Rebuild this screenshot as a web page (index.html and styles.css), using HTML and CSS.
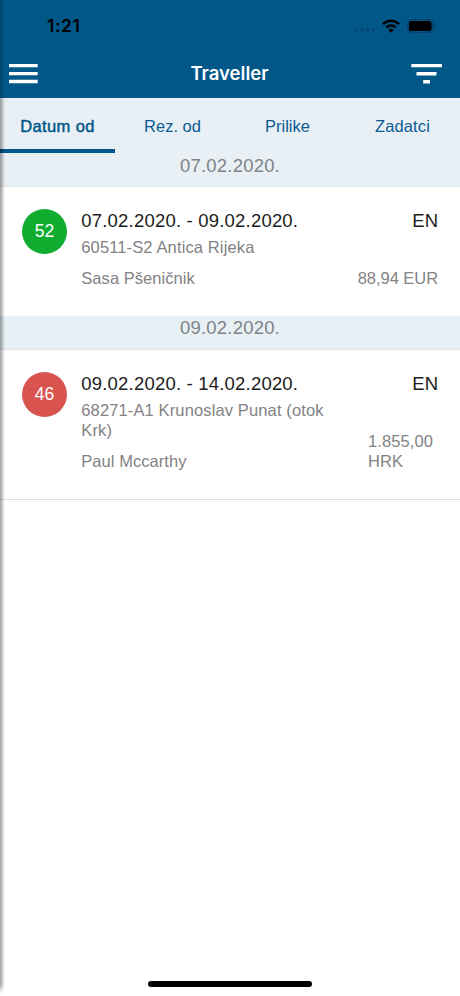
FILE: index.html
```html
<!DOCTYPE html>
<html lang="hr">
<head>
<meta charset="utf-8">
<title>Traveller</title>
<link rel="stylesheet" href="styles.css">
</head>
<body>
<div class="screen">
  <header class="header">
    <div class="status">
      <span class="time">1:21</span>
      <div class="indicators">
        <svg class="signal" width="20" height="4" viewBox="0 0 20 4"><g fill="#034672"><rect x="0" y=".5" width="3" height="3" rx="1"/><rect x="5.5" y=".5" width="3" height="3" rx="1"/><rect x="11" y=".5" width="3" height="3" rx="1"/><rect x="16.5" y=".5" width="3" height="3" rx="1"/></g></svg>
        <svg class="wifi" width="18" height="14" viewBox="0 0 18 14"><g fill="none" stroke="#000" stroke-width="2.4"><path d="M1 5.2C5.5.6 12.500.6 17 5.2"/><path d="M4.2 8.500c2.700-2.700 6.900-2.700 9.600 0"/></g><path d="M6.200 10.900c1.600-1.400 4-1.400 5.600 0L9 13.700z"/></svg>
        <svg class="battery" width="29" height="14" viewBox="0 0 29 14"><rect x=".5" y=".5" width="25.500" height="12.800" rx="4" fill="none" stroke="#033e64"/><rect x="1.800" y="1.900" width="22.800" height="10" rx="2.500"/><path d="M27 4.800q2 2.100 0 4.200z" fill="#033e64"/></svg>
      </div>
    </div>
    <div class="toolbar">
      <svg class="menu-icon" width="31" height="20" viewBox="0 0 31 20"><path d="M0 1.700h28.700M0 9.700h28.700M0 17.500h28.700" stroke="#fff" stroke-width="3.300"/></svg>
      <h1 class="title">Traveller</h1>
      <svg class="filter-icon" width="31" height="20" viewBox="0 0 31 20"><path d="M.3 1.600h30.600M5.500 9.700h20M12.200 17.700h6.800" stroke="#fff" stroke-width="3.400"/></svg>
    </div>
  </header>
  <nav class="tabs">
    <a class="tab active"><span>Datum od</span></a>
    <a class="tab"><span>Rez. od</span></a>
    <a class="tab"><span>Prilike</span></a>
    <a class="tab"><span>Zadatci</span></a>
  </nav>
  <main>
    <h2 class="day first">07.02.2020.</h2>
    <article class="card">
      <div class="badge green">52</div>
      <div class="details">
        <div class="dates">07.02.2020. - 09.02.2020.</div>
        <div class="unit">60511-S2 Antica Rijeka</div>
        <div class="guest">Sasa Pšeničnik</div>
      </div>
      <div class="side">
        <div class="lang">EN</div>
        <div class="amount">88,94 EUR</div>
      </div>
    </article>
    <h2 class="day">09.02.2020.</h2>
    <article class="card last">
      <div class="badge red">46</div>
      <div class="details">
        <div class="dates">09.02.2020. - 14.02.2020.</div>
        <div class="unit">68271-A1 Krunoslav Punat (otok Krk)</div>
        <div class="guest">Paul Mccarthy</div>
      </div>
      <div class="side">
        <div class="lang">EN</div>
        <div class="amount wrapped">1.855,00 HRK</div>
      </div>
    </article>
  </main>
  <div class="edge-shadow"></div>
  <div class="home-indicator"></div>
</div>
</body>
</html>
```
FILE: styles.css
```css
* { box-sizing: border-box; }
html { background: #fff; }
body { margin: 0; background: #fff; }
.screen {
  position: relative;
  width: 460px;
  height: 996px;
  overflow: hidden;
  background: #fff;
  font-family: "Liberation Sans", Arial, sans-serif;
  color: #1c1c20;
}
.header { height: 98px; background: #015788; }
.status {
  height: 49px;
  padding: 2px 24px 0 47px;
  display: flex;
  justify-content: space-between;
  align-items: center;
}
.time {
  font: 600 17.5px/20px Inter, sans-serif;
  letter-spacing: .5px;
  color: #000;
}
.indicators { display: flex; align-items: center; }
.signal { margin: 9px 7px 0 0; }
.wifi { margin-right: 7px; }
.toolbar {
  height: 49px;
  padding: 0 18px 0 9px;
  display: grid;
  grid-template-columns: 31px 1fr 31px;
  align-items: center;
}
.title {
  margin: -1px 0 0;
  padding-left: 8px;
  text-align: center;
  font: 600 18.500px/24px Inter, sans-serif;
  color: #fff;
}
.tabs {
  height: 55px;
  display: grid;
  grid-template-columns: repeat(4, 1fr);
  background: #e8f0f5;
}
.tab {
  display: flex;
  justify-content: center;
  padding-top: 18px;
  font-size: 16.500px;
  line-height: 20px;
  color: #0b5b92;
  border-bottom: 4px solid transparent;
  white-space: nowrap;
}
.tab.active {
  color: #015788;
  border-color: #015788;
  -webkit-text-stroke: .45px #015788;
  letter-spacing: .4px;
}
.tab:last-child { letter-spacing: .15px; }
.day {
  margin: 0;
  height: 34px;
  padding-top: 1px;
  font-size: 18.500px;
  line-height: 22px;
  font-weight: 400;
  letter-spacing: .2px;
  text-align: center;
  color: #808386;
  background: #e7f0f4;
  border-bottom: 1px solid #dfe4e7;
}
.day.first { background: #e8f0f5; padding-top: 2px; }
.card {
  height: 129px;
  padding: 22px 22px 0 22px;
  display: flex;
}
.card.last { height: 150px; border-bottom: 1px solid #dedfe1; }
.badge {
  width: 45px;
  height: 45px;
  margin-right: 14.300px;
  border-radius: 50%;
  font-size: 17.500px;
  line-height: 45px;
  text-align: center;
  color: #fff;
}
.green { background: #0fac30; }
.red { background: #d9534f; }
.details { width: 255px; }
.dates, .lang { font-size: 18.500px; line-height: 24px; letter-spacing: .2px; }
.lang { letter-spacing: 0; }
.unit, .guest, .amount { font-size: 16.500px; line-height: 20px; color: #828284; }
.unit { margin-top: 4px; letter-spacing: .13px; }
.guest { margin-top: 11px; letter-spacing: .05px; }
.side { flex: 1; display: flex; flex-direction: column; align-items: flex-end; white-space: nowrap; }
.amount { margin-top: 35px; letter-spacing: -.05px; }
.amount.wrapped { width: 70px; white-space: normal; letter-spacing: .1px; }
.edge-shadow {
  position: absolute;
  left: 0;
  top: 0;
  width: 5px;
  height: 994px;
  background: linear-gradient(to right, rgba(0,0,0,.38), rgba(0,0,0,.2) 45%, rgba(0,0,0,0));
  -webkit-mask-image: linear-gradient(to bottom, rgba(0,0,0,.6) 98px, #000 99px, #000 984px, transparent);
  mask-image: linear-gradient(to bottom, rgba(0,0,0,.6) 98px, #000 99px, #000 984px, transparent);
}
.home-indicator {
  position: absolute;
  left: 148px;
  bottom: 9px;
  width: 164px;
  height: 6px;
  border-radius: 3px;
  background: #000;
}
```
